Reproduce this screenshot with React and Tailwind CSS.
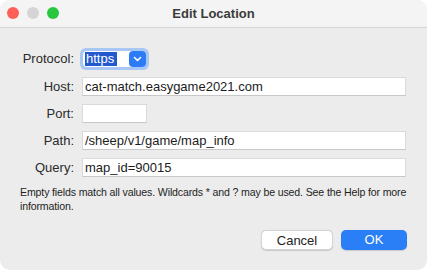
const fields = [
  { label: "Host:", value: "cat-match.easygame2021.com" },
  { label: "Port:", value: "", short: true },
  { label: "Path:", value: "/sheep/v1/game/map_info" },
  { label: "Query:", value: "map_id=90015" },
];

function Field({ label, value, short }) {
  return (
    <div className="flex items-center h-[19px]">
      <span className="w-[74px] shrink-0 text-right text-[13px] text-[#2a2a2a]">
        {label}
      </span>
      <div
        className={`ml-[8px] h-[19px] bg-white border border-[#dadada] border-b-[#c8c8c8] pl-[2px] text-[13px] leading-[17px] text-[#1c1c1c] ${
          short ? "w-[65px]" : "flex-1"
        }`}
      >
        {value}
      </div>
    </div>
  );
}

export default function App() {
  return (
    <div className="w-[427px] h-[270px] bg-white">
      <div
        className="w-[427px] h-[270px] rounded-[10px] overflow-hidden bg-[#ececec] flex flex-col"
        style={{ fontFamily: '"Liberation Sans", Arial, sans-serif' }}
      >
        {/* title bar */}
        <div className="relative h-[28px] shrink-0 bg-[#f4f4f5] border-b border-[#d6d6d6] flex items-center justify-center">
          <div className="absolute left-[7px] top-[7px] flex gap-[8px]">
            <span className="w-[12px] h-[12px] rounded-full bg-[#fe5f57]" />
            <span className="w-[12px] h-[12px] rounded-full bg-[#d5d5d5]" />
            <span className="w-[12px] h-[12px] rounded-full bg-[#29c73f]" />
          </div>
          <span className="text-[13px] font-bold text-[#3b3b3b]">
            Edit Location
          </span>
        </div>

        <div className="flex flex-col pr-[21px] pt-[20px]">
          {/* protocol */}
          <div className="flex items-center h-[22px]">
            <span className="w-[74px] shrink-0 text-right text-[13px] text-[#2a2a2a]">
              Protocol:
            </span>
            <div className="ml-[6px] w-[69px] h-[22px] rounded-[6px] bg-[#a8c7f4] p-[3px]">
              <div className="flex items-center h-[16px] bg-white rounded-[4px] pl-[2px]">
                <span className="bg-[#2359cf] text-white text-[13px] leading-[14px] px-[1px] w-[32px]">
                  https
                </span>
                <span className="ml-auto w-[17px] h-[16px] rounded-[4px] bg-[#2d7cf6] flex items-center justify-center">
                  <svg width="9" height="6" viewBox="0 0 9 6" fill="none">
                    <path
                      d="M1.5 1.5 L4.5 4.5 L7.5 1.5"
                      stroke="white"
                      strokeWidth="1.6"
                      strokeLinecap="round"
                      strokeLinejoin="round"
                    />
                  </svg>
                </span>
              </div>
            </div>
          </div>

          <div className="flex flex-col gap-[8px] mt-[7px]">
            {fields.map((f) => (
              <Field key={f.label} {...f} />
            ))}
          </div>
        </div>

        <p className="mt-[8px] pl-[20px] pr-[8px] text-[10.6px] tracking-[-0.15px] leading-[14px] text-[#1e1e1e]">
          Empty fields match all values. Wildcards * and ? may be used. See the
          Help for more information.
        </p>

        <div className="flex justify-end gap-[8px] pr-[20px] mt-[17px]">
          <button className="w-[72px] h-[20px] rounded-[5px] bg-white border border-[#d4d4d4] shadow-[0_0.5px_1px_rgba(0,0,0,0.15)] text-[13px] text-[#222]">
            Cancel
          </button>
          <button className="w-[66px] h-[20px] rounded-[5px] bg-[#2a7ef6] shadow-[0_0.5px_1px_rgba(0,0,0,0.15)] text-[13px] text-white">
            OK
          </button>
        </div>
      </div>
    </div>
  );
}
